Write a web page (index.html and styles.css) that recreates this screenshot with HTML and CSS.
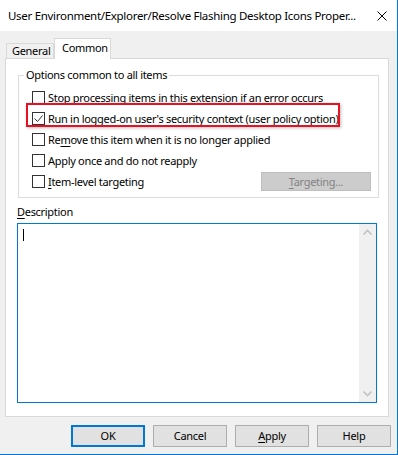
FILE: index.html
```html
<!DOCTYPE html>
<html lang="en">
<head>
  <meta charset="UTF-8">
  <title>Resolve Flashing Desktop Icons Properties</title>
  <link rel="stylesheet" href="styles.css">
</head>
<body>
  <div class="window">
    <div class="titlebar">
      <span class="title">User Environment/Explorer/Resolve Flashing Desktop Icons Proper...</span>
      <svg class="close" width="10" height="10" viewBox="0 0 10 10"><path d="M0.5 0.5 L9.5 9.5 M9.5 0.5 L0.5 9.5" stroke="#000" stroke-width="1" fill="none"/></svg>
    </div>
    <div class="tabs">
      <div class="tab">General</div>
      <div class="tab active">Common</div>
    </div>
    <div class="pane">
      <fieldset class="group">
        <legend>Options common to all items</legend>
        <div class="row"><span class="check"></span><span>Stop <u>p</u>rocessing items in this extension if an error occurs</span></div>
        <div class="row highlighted">
          <span class="check"><svg width="11" height="11" viewBox="0 0 11 11"><path d="M1.5 5.5 L4.5 8.5 L9.5 2.5" stroke="#333" stroke-width="1" fill="none"/></svg></span>
          <span><u>R</u>un in logged-on user's security context (user policy option)</span>
          <span class="marker"></span>
        </div>
        <div class="row"><span class="check"></span><span>Re<u>m</u>ove this item when it is no longer applied</span></div>
        <div class="row"><span class="check"></span><span>Apply once and do not reapply</span></div>
        <div class="row"><span class="check"></span><span><u>I</u>tem-level targeting</span><span class="btn-disabled"><u>T</u>argeting...</span></div>
      </fieldset>
      <div class="desc-label"><u>D</u>escription</div>
      <div class="textbox">
        <div class="text"><span class="caret"></span></div>
        <div class="scrollbar">
          <svg width="17" height="17" viewBox="0 0 17 17"><path d="M4.5 10.5 L8.5 6.5 L12.5 10.5" stroke="#c2c2c2" stroke-width="1.6" fill="none"/></svg>
          <svg width="17" height="17" viewBox="0 0 17 17"><path d="M4.5 6.5 L8.5 10.5 L12.5 6.5" stroke="#c2c2c2" stroke-width="1.6" fill="none"/></svg>
        </div>
      </div>
    </div>
    <div class="buttons">
      <span class="btn default">OK</span>
      <span class="btn">Cancel</span>
      <span class="btn"><u>A</u>pply</span>
      <span class="btn">Help</span>
    </div>
  </div>
</body>
</html>
```

FILE: styles.css
```css
* { box-sizing: border-box; }
html, body { margin: 0; padding: 0; }

body {
  font-family: 'Noto Sans', 'Liberation Sans', sans-serif;
  font-size: 11px;
  letter-spacing: -0.3px;
  color: #000;
  background: #f0f0f0;
}

u { text-decoration-thickness: 1px; text-underline-offset: 2px; }

.window {
  width: 398px;
  height: 455px;
  background: #f0f0f0;
  border-right: 1px solid #0078d7;
  border-bottom: 1px solid #0078d7;
}

/* Title bar */
.titlebar {
  height: 31px;
  background: #fff;
  display: flex;
  align-items: center;
  padding: 0 10px 0 8px;
}

.title { flex: 1; white-space: nowrap; line-height: 16px; font-size: 11.5px; }
.close { flex: 0 0 10px; }

/* Tabs */
.tabs {
  height: 27px;
  display: flex;
  align-items: flex-end;
  padding-left: 6px;
}

.tab {
  height: 15px;
  width: 48px;
  border: 1px solid #d9d9d9;
  border-bottom: none;
  background: #f0f0f0;
  padding-left: 5px;
  line-height: 14px;
}

.tab.active {
  position: relative;
  z-index: 1;
  height: 21px;
  width: 57px;
  margin-bottom: -1px;
  background: #fff;
  padding-left: 7px;
  line-height: 18px;
}

/* Tab page */
.pane {
  margin-left: 5px;
  width: 384px;
  height: 359px;
  border: 1px solid #d9d9d9;
  background: #fff;
  padding: 0 11px;
}

.group {
  margin: 8px -2px 0 1px;
  padding: 4px 7px 5px 13px;
  border: 1px solid #dcdcdc;
  min-width: 0;
}

.group legend {
  padding: 0 2px;
  margin-left: -8px;
  line-height: 16px;
}

.row {
  height: 21px;
  display: flex;
  align-items: center;
  gap: 3px;
  white-space: nowrap;
}

.check {
  flex: 0 0 13px;
  height: 13px;
  border: 1px solid #333;
  background: #fff;
  display: flex;
  align-items: center;
  justify-content: center;
}

.highlighted { position: relative; }

.marker {
  position: absolute;
  left: -6px;
  top: -5px;
  width: 314px;
  height: 24px;
  border: 2px solid #e81123;
  box-shadow: 1px 1px 3px rgba(0,0,0,0.25);
}

.btn-disabled {
  margin-left: auto;
  width: 110px;
  height: 19px;
  border: 1px solid #bfbfbf;
  background: #cccccc;
  color: #838383;
  text-align: center;
  line-height: 17px;
}

.desc-label {
  margin-top: 6px;
  line-height: 16px;
}

.textbox {
  margin-top: 3px;
  height: 180px;
  border: 1px solid #0078d7;
  display: flex;
}

.text { flex: 1; padding: 5px 0 0 5px; }

.caret {
  display: block;
  width: 1px;
  height: 12px;
  background: #000;
}

.scrollbar {
  flex: 0 0 17px;
  background: #f0f0f0;
  display: flex;
  flex-direction: column;
  justify-content: space-between;
}

/* Dialog buttons */
.buttons {
  margin-top: 8px;
  display: flex;
  justify-content: flex-end;
  gap: 8px;
  padding-right: 6px;
}

.btn {
  width: 74px;
  height: 22px;
  border: 1px solid #adadad;
  background: #e1e1e1;
  text-align: center;
  line-height: 20px;
}

.btn.default {
  border: 2px solid #0078d7;
  line-height: 18px;
}
```
